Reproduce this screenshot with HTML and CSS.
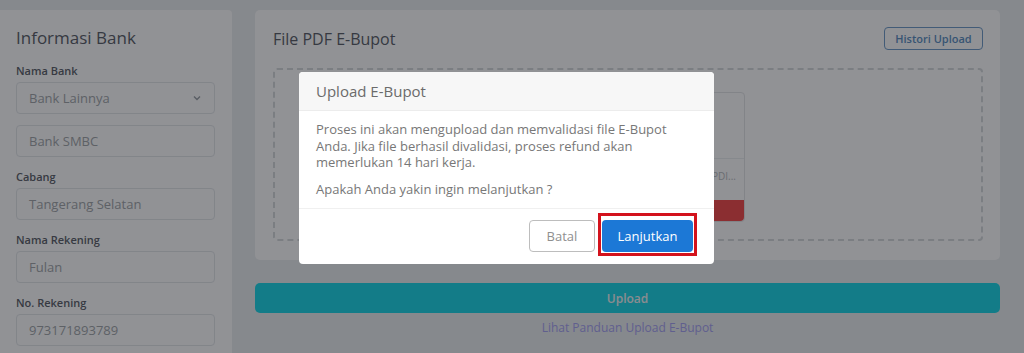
FILE: index.html
```html
<!DOCTYPE html>
<html lang="id">
<head>
    <meta charset="UTF-8">
    <meta name="viewport" content="width=device-width, initial-scale=1.0">
    <title>Upload E-Bupot</title>
    <link rel="stylesheet" href="styles.css">
</head>
<body>
    <div class="page">
        <aside class="bank-card">
            <h2>Informasi Bank</h2>

            <label>Nama Bank</label>
            <div class="field select">
                <span>Bank Lainnya</span>
                <svg width="10" height="10" viewBox="0 0 10 10"><path d="M2 3.5 5 6.5 8 3.5" fill="none" stroke="#9aa0a6" stroke-width="1.4"/></svg>
            </div>
            <div class="field">Bank SMBC</div>

            <label>Cabang</label>
            <div class="field">Tangerang Selatan</div>

            <label>Nama Rekening</label>
            <div class="field">Fulan</div>

            <label>No. Rekening</label>
            <div class="field">973171893789</div>
        </aside>

        <main class="upload-col">
            <section class="upload-card">
                <div class="upload-head">
                    <h2>File PDF E-Bupot</h2>
                    <button class="btn-history">Histori Upload</button>
                </div>
                <div class="dropzone">
                    <div class="file-item">
                        <div class="file-thumb"></div>
                        <p class="file-name">E-BUPOT_PDI...</p>
                        <button class="file-remove">Hapus</button>
                    </div>
                </div>
            </section>
            <button class="btn-upload">Upload</button>
            <a class="guide-link" href="#">Lihat Panduan Upload E-Bupot</a>
        </main>
    </div>

    <div class="backdrop"></div>

    <div class="modal">
        <div class="modal-head">Upload E-Bupot</div>
        <div class="modal-body">
            <p>Proses ini akan mengupload dan memvalidasi file E-Bupot Anda. Jika file berhasil divalidasi, proses refund akan memerlukan 14 hari kerja.</p>
            <p>Apakah Anda yakin ingin melanjutkan ?</p>
        </div>
        <div class="modal-foot">
            <button class="btn-cancel">Batal</button>
            <button class="btn-confirm">Lanjutkan</button>
        </div>
    </div>
</body>
</html>
```

FILE: styles.css
```css
* {
    box-sizing: border-box;
    margin: 0;
    padding: 0;
}
body {
    font-family: 'Open Sans', 'Noto Sans', sans-serif;
    background: #eceef0;
    height: 353px;
    overflow: hidden;
}
.page {
    display: flex;
    gap: 23px;
    padding-top: 10px;
}
.bank-card {
    width: 232px;
    height: 360px;
    background: #fff;
    border-radius: 0 4px 0 0;
    padding: 16px 17px 0 16px;
    display: flex;
    flex-direction: column;
}
.bank-card h2 {
    font-size: 17px;
    font-weight: 500;
    line-height: 24px;
    color: #5a5e68;
    margin-bottom: 13px;
}
.bank-card label {
    font-size: 11px;
    font-weight: 600;
    line-height: 16px;
    color: #5c5f69;
    margin-bottom: 3px;
}
.field {
    height: 32px;
    border: 1px solid #e4e7ea;
    border-radius: 4px;
    padding: 0 12px;
    display: flex;
    align-items: center;
    justify-content: space-between;
    font-size: 13px;
    color: #a2a6aa;
    margin-bottom: 12px;
}
.field.select {
    margin-bottom: 11px;
    padding-right: 12px;
}
.upload-col {
    width: 745px;
    display: flex;
    flex-direction: column;
}
.upload-card {
    background: #fff;
    border-radius: 5px;
    height: 250px;
    padding: 17px 17px 0 18px;
}
.upload-head {
    display: flex;
    justify-content: space-between;
    align-items: center;
    height: 23px;
}
.upload-head h2 {
    font-size: 16px;
    font-weight: 500;
    color: #5a5e68;
}
.btn-history {
    font-family: inherit;
    font-size: 11px;
    font-weight: 600;
    color: #5c8fc2;
    background: #fff;
    border: 1px solid #6f9cc8;
    border-radius: 4px;
    height: 23px;
    width: 99px;
}
.dropzone {
    margin-top: 18px;
    height: 173px;
    border: 2px dashed #d7dadd;
    border-radius: 4px;
    display: flex;
    justify-content: center;
    padding-top: 22px;
}
.file-item {
    width: 234px;
    height: 130px;
    border: 1px solid #e3e5e8;
    border-radius: 4px;
    display: flex;
    flex-direction: column;
    align-items: flex-end;
}
.file-thumb {
    width: 100%;
    height: 66px;
    border-bottom: 1px solid #eceef0;
}
.file-name {
    font-size: 10px;
    color: #b9bcc0;
    margin: 10px 8px 0 0;
}
.file-remove {
    margin-top: auto;
    width: 100%;
    height: 21px;
    border: none;
    border-radius: 0 0 4px 4px;
    background: #f44a4a;
    color: #fff;
    font-size: 10px;
}
.btn-upload {
    margin-top: 23px;
    height: 30px;
    border: none;
    border-radius: 5px;
    background: #1ad8e8;
    color: #f2f4f5;
    font-family: inherit;
    font-size: 12px;
    font-weight: 600;
}
.guide-link {
    margin-top: 6px;
    text-align: center;
    font-size: 12px;
    color: #a6a3f3;
    text-decoration: none;
}
.backdrop {
    position: fixed;
    inset: 0;
    background: rgba(10, 14, 20, 0.45);
}
.modal {
    position: absolute;
    left: 299px;
    top: 72px;
    width: 415px;
    background: #fff;
    border-radius: 4px;
}
.modal-head {
    height: 39px;
    background: #f7f7f7;
    border-bottom: 1px solid #ececec;
    border-radius: 4px 4px 0 0;
    padding: 0 17px;
    display: flex;
    align-items: center;
    font-size: 15px;
    color: #6b6b6b;
}
.modal-body {
    padding: 10px 30px 11px 17px;
    border-bottom: 1px solid #f0f0f0;
    font-size: 13px;
    line-height: 16.5px;
    color: #777;
}
.modal-body p + p {
    margin-top: 10px;
}
.modal-foot {
    display: flex;
    justify-content: flex-end;
    gap: 7px;
    padding: 11px 21px 12px;
}
.modal-foot button {
    font-family: inherit;
    font-size: 13px;
    height: 32px;
    border-radius: 4px;
}
.btn-cancel {
    width: 66px;
    background: #fff;
    border: 1px solid #bdbdbd;
    color: #8f8f8f;
}
.btn-confirm {
    position: relative;
    width: 91px;
    background: #1c78d6;
    border: none;
    color: #fff;
    font-weight: 500;
}
.btn-confirm::after {
    content: "";
    position: absolute;
    left: -4px;
    right: -4px;
    top: -7px;
    bottom: -4px;
    border: 3px solid #d3121c;
}
```
